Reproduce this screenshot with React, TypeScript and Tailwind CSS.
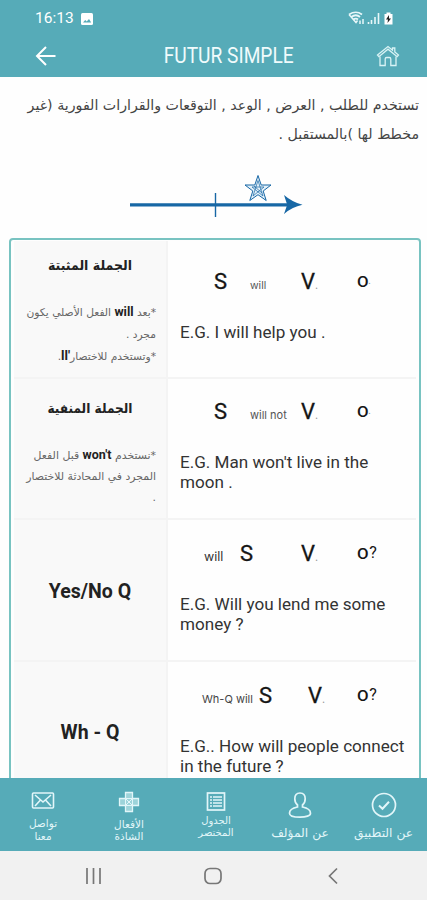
import type { ReactNode } from 'react'
import clsx from 'clsx'

type Token = { text: string; className: string }

const big = "font-['Roboto'] text-[22px] text-[#151515] [-webkit-text-stroke:0.3px_#151515]"
const small = "font-['Inter'] text-[10.5px] text-[#555]"
const cellBase = 'border-b-2 border-[#f4f4f4]'

function Formula({ cols, first, second, end }: { cols: string; first: Token; second: Token; end: string }) {
  return (
    <div className={clsx('grid h-[30px] items-baseline whitespace-nowrap leading-[30px]', cols)}>
      <span className={first.className}>{first.text}</span>
      <span className={second.className}>{second.text}</span>
      <span className={big}>V<span className="text-[12px] text-[#999] [-webkit-text-stroke:0]">.</span></span>
      <span className="font-['Roboto'] text-[15px] font-medium text-[#151515]">
        <span className="relative -top-[2px] inline-block origin-left scale-x-[1.12]">O</span>
        {end === '?'
          ? <span className="relative -top-[3px] ml-[2px] text-[16px] font-normal">?</span>
          : <span className="relative -top-[5px] ml-[1px] text-[9px] text-[#999]">.</span>}
      </span>
    </div>
  )
}

function Row({ label, formula, lines, height, pad }: { label: ReactNode; formula: ReactNode; lines: string[]; height: string; pad: string }) {
  return (
    <div className={clsx('flex', height)}>
      <div className={clsx('w-[154px] shrink-0 border-r-2 bg-[#f9f9f9]', cellBase)}>{label}</div>
      <div className={clsx('flex-1', cellBase, pad)}>
        {formula}
        <div className="mt-[25px] pl-[12px] font-['Roboto'] text-[17.1px] leading-[20px] text-[#333]">
          {lines.map(line => <p key={line} className="whitespace-nowrap">{line}</p>)}
        </div>
      </div>
    </div>
  )
}

function NavItem({ icon, lines, size, gap, width }: { icon: ReactNode; lines: string[]; size: string; gap: string; width: string }) {
  return (
    <button className={clsx('flex shrink-0 flex-col items-center pt-[13px] text-[#e2f6f9]', width)}>
      {icon}
      <span dir="rtl" className={clsx("flex flex-col whitespace-nowrap font-['DejaVu_Sans',sans-serif]", size, gap)}>
        {lines.map(line => <span key={line}>{line}</span>)}
      </span>
    </button>
  )
}

export default function App() {
  return (
    <div className="flex h-[900px] w-[427px] flex-col overflow-hidden bg-[#fefefe] font-['Roboto','DejaVu_Sans',sans-serif]">
      <header className="h-[77px] shrink-0 bg-[#56abb8] text-white">
        <div className="flex h-[34px] items-center justify-between pl-[35px] pr-[33px]">
          <div className="flex items-center gap-[7px] pt-[3px]">
            <span className="text-[15.5px] leading-none">16:13</span>
            <svg width="12" height="12" viewBox="0 0 12 12">
              <rect width="12" height="12" rx="1.5" fill="#fff" />
              <path d="M2 9.5 4.2 7l1.5 1.5L8 6l2.2 3.5z" fill="#56abb8" />
            </svg>
          </div>
          <svg width="46" height="14" viewBox="0 0 46 14" fill="none" stroke="#e8f7f9" className="mt-[2px]">
            <path d="M1 3.500Q8-1 14 3.500M3.200 6Q8 2.500 12 6M5.300 8.500Q8 6.700 10 8.500" strokeWidth="1.700" />
            <path d="m1 3.500 7 8 1.500-2M15 8v5M12 13V9.500" strokeWidth="1.500" />
            <path d="M20.500 13v-2M23.500 13V9M27 13V6M30.500 13V2" strokeWidth="1.600" />
            <path d="M36.500 3h2V1.500h4V3h2v10.500h-8z" fill="#fff" stroke="none" />
            <path d="m41 4-3 4.500h2L39.500 12 43 7.500h-2z" fill="#222" stroke="none" />
          </svg>
        </div>
        <div className="flex h-[43px] items-center justify-between pl-[35px] pr-[27px]">
          <svg width="21" height="20" viewBox="0 0 21 20" fill="none" stroke="#fff" strokeWidth="2">
            <path d="M11 1 2 10l9 9M2 10h18.500" />
          </svg>
          <h1 className="flex w-[145px] justify-center whitespace-nowrap pl-[25px]">
            <span className="inline-block scale-x-[0.87] text-[22px] leading-none text-[#f0fbfc]">FUTUR SIMPLE</span>
          </h1>
          <svg width="24" height="22" viewBox="0 0 24 22" fill="none" stroke="#d9f3f5" strokeWidth="1.3">
            <path d="M1.500 10 12 1.500l4.500 3.700V3h2.300v4L22.500 10l-1.400 1.700L12 4.200l-9.100 7.500z" />
            <path d="M4 11.500V20.500h5.200V14q0-1.500 1.500-1.500h2.600q1.500 0 1.500 1.500v6.500H20v-9" />
          </svg>
        </div>
      </header>

      <main className="flex h-[701px] shrink-0 flex-col overflow-hidden">
        <div dir="rtl" className="h-[96px] shrink-0 whitespace-nowrap pr-[8px] pt-[14px] font-['DejaVu_Sans',sans-serif] text-[14.2px] leading-[29px] text-[#444]">
          <p>تستخدم للطلب , العرض , الوعد , التوقعات والقرارات الفورية (غير</p>
          <p>مخطط لها )بالمستقبل .</p>
        </div>

        <svg width="174" height="46" viewBox="0 0 174 46" fill="none" stroke="#1767a5" className="ml-[130px] shrink-0">
          <path d="M0 31.800h160" strokeWidth="3.200" />
          <path d="M85.500 20v24" strokeWidth="1.400" />
          <path d="M154 22q8 7 18.500 9.800Q162 34 154 41l3.200-9.200z" fill="#1767a5" stroke="none" />
          <path d="m128 2.500 3.200 9.500H141l-7.800 6 3 9.500-8.200-5.800-8.200 5.800 3-9.500-7.800-6h9.800z" strokeWidth="1" fill="#e3f0f9" />
          <path d="m128 7.500 5 15.500-11-9h12l-11 9zM124 13l8 7" strokeWidth=".7" />
        </svg>

        <section className="ml-[9px] mt-[19px] w-[412px] shrink-0 rounded-[4px] border-2 border-[#78c3c1] px-[3px] pt-[1px]">
          <Row
            height="h-[138px]"
            pad="pt-[26px]"
            label={
              <div dir="rtl" className="whitespace-nowrap pt-[10px] font-['DejaVu_Sans',sans-serif]">
                <h2 className="scale-x-[0.93] text-center text-[13.500px] font-bold leading-[28px] text-[#222]">الجملة المثبتة</h2>
                <div className="pr-[10px] pt-[22px] text-[10.700px] leading-[21.500px] text-[#666]">
                  <p>*بعد <b className="font-['Roboto'] text-[12.500px] text-[#222]">will</b> الفعل الأصلي يكون</p>
                  <p>مجرد .</p>
                  <p>*وتستخدم للاختصار<b className="font-['Roboto'] text-[13px] text-[#222]">'ll</b>.</p>
                </div>
              </div>
            }
            formula={
              <Formula
                cols="grid-cols-[36px_51px_56px_auto] pl-[46px]"
                first={{ text: 'S', className: big }}
                second={{ text: 'will', className: small }}
                end="."
              />
            }
            lines={['E.G. I will help you .']}
          />
          <Row
            height="h-[141px]"
            pad="pt-[18px]"
            label={
              <div dir="rtl" className="whitespace-nowrap pt-[15px] font-['DejaVu_Sans',sans-serif]">
                <h2 className="scale-x-[0.9] text-center text-[13.500px] font-bold leading-[28px] text-[#222]">الجملة المنفية</h2>
                <div className="pr-[10px] pt-[22px] text-[10.900px] leading-[21px] text-[#666]">
                  <p>*نستخدم <b className="font-['Roboto'] text-[12.500px] text-[#222]">won't</b> قبل الفعل</p>
                  <p>المجرد في المحادثة للاختصار</p>
                  <p>.</p>
                </div>
              </div>
            }
            formula={
              <Formula
                cols="grid-cols-[36px_51px_56px_auto] pl-[46px]"
                first={{ text: 'S', className: big }}
                second={{ text: 'will not', className: "font-['Inter'] text-[11px] text-[#555]" }}
                end="."
              />
            }
            lines={["E.G. Man won't live in the", 'moon .']}
          />
          <Row
            height="h-[142px]"
            pad="pt-[19px]"
            label={<h2 className="pt-[58px] text-center text-[19.500px] font-bold leading-[28px] text-[#222]">Yes/No Q</h2>}
            formula={
              <Formula
                cols="grid-cols-[36px_61px_56px_auto] pl-[36px]"
                first={{ text: 'will', className: "font-['Inter'] text-[12.5px] text-[#333]" }}
                second={{ text: 'S', className: big }}
                end="?"
              />
            }
            lines={['E.G. Will you lend me some', 'money ?']}
          />
          <Row
            height="h-[142px]"
            pad="pt-[19px]"
            label={<h2 className="pt-[57px] text-center text-[19.500px] font-bold leading-[28px] text-[#222]">Wh - Q</h2>}
            formula={
              <Formula
                cols="grid-cols-[57px_49px_49px_auto] pl-[34px]"
                first={{ text: 'Wh-Q will', className: "font-['Inter'] text-[11px] text-[#444]" }}
                second={{ text: 'S', className: big }}
                end="?"
              />
            }
            lines={['E.G.. How will people connect', 'in the future ?']}
          />
        </section>
      </main>

      <nav className="flex h-[73px] shrink-0 bg-[#56abb8]">
        <NavItem
          width="w-[86px]"
          size="text-[10.500px] leading-[13px]"
          gap="mt-[8px]"
          lines={['تواصل', 'معنا']}
          icon={
            <svg width="24" height="18" viewBox="0 0 24 18" fill="none" stroke="currentColor" strokeWidth="1.600">
              <rect x="1.500" y="2" width="21" height="15" rx="1" />
              <path d="m4 4 8 7 8-7M4 15l5.500-6M20 15l-5.500-6" />
            </svg>
          }
        />
        <NavItem
          width="w-[86px]"
          size="text-[10.500px] leading-[12px]"
          gap="mt-[5px]"
          lines={['الأفعال', 'الشاذة']}
          icon={
            <svg width="22" height="22" viewBox="0 0 22 22" fill="#9dd4da" stroke="currentColor" strokeWidth="1.300">
              <path d="M7.500 1.500h7v6h6v7h-6v6h-7v-6h-6v-7h6z" />
              <path d="M7.500 7.500h7v7h-7zM7.500 7.500l7 7M14.500 7.500l-7 7" strokeWidth="1" />
            </svg>
          }
        />
        <NavItem
          width="w-[88px]"
          size="text-[10px] leading-[12px]"
          gap="mt-[2px]"
          lines={['الجدول', 'المختصر']}
          icon={
            <svg width="20" height="22" viewBox="0 0 20 22" fill="none" stroke="currentColor" strokeWidth="1.700">
              <rect x="1.500" y="2" width="17" height="17" />
              <path d="M4 6h2M7 6h9M4 9h2M7 9h9M4 12h2M7 12h9M4 15h2M7 15h9" />
            </svg>
          }
        />
        <NavItem
          width="w-[80px]"
          size="text-[12.300px] leading-[15px]"
          gap="mt-[7px]"
          lines={['عن المؤلف']}
          icon={
            <svg width="24" height="28" viewBox="0 0 24 28" fill="none" stroke="currentColor" strokeWidth="1.700">
              <path d="M12 2c-3.500 0-5.200 2.600-5.200 5.800 0 3 1.500 5.300 2.700 6.200v2C4.500 17 1.500 19 1.500 22.200c0 2.500 4.500 4 10.500 4s10.500-1.500 10.500-4c0-3.200-3-5.200-8-6.200v-2c1.200-.9 2.700-3.200 2.700-6.200C17.200 4.600 15.500 2 12 2z" />
            </svg>
          }
        />
        <NavItem
          width="w-[87px]"
          size="text-[12.300px] leading-[15px]"
          gap="mt-[7px]"
          lines={['عن التطبيق']}
          icon={
            <svg width="26" height="28" viewBox="0 0 26 28" fill="none" stroke="currentColor" strokeWidth="1.700">
              <circle cx="13" cy="14" r="11.500" />
              <path d="m8 14.500 3.500 3.300 6.500-7" strokeWidth="2" />
            </svg>
          }
        />
      </nav>

      <div className="flex h-[49px] shrink-0 items-center bg-[#f1f1f1]">
        <svg width="427" height="20" viewBox="0 0 427 20" fill="none" stroke="#777" strokeWidth="1.700">
          <path d="M87 2v16M93.500 2v16M100 2v16" />
          <rect x="205" y="2.500" width="16" height="15" rx="5" />
          <path d="m337 2.500-7.500 7.500 7.500 7.500" />
        </svg>
      </div>
    </div>
  )
}
